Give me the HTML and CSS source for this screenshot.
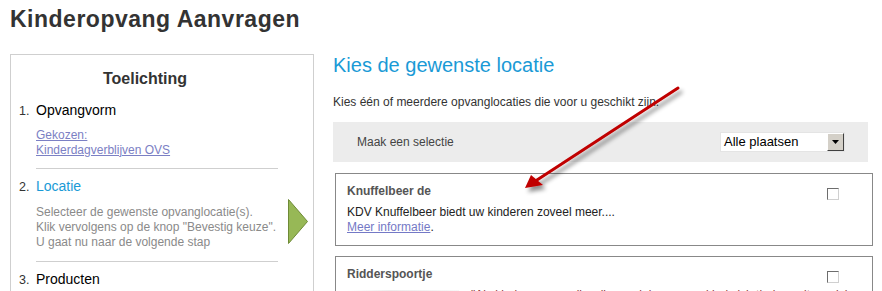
FILE: index.html
```html
<!DOCTYPE html>
<html>
	<head>
		<meta charset="UTF-8">
		<title>Kinderopvang Aanvragen</title>
		<link rel="stylesheet" href="styles.css">
	</head>
	<body>
		<div class="page">
			<h1 class="page-title">Kinderopvang Aanvragen</h1>
			<div class="main">
				<div class="sidebar">
					<h2 class="sidebar-title">Toelichting</h2>
					<div class="step">
						<span class="step-num">1.</span>
						<div class="step-body">
							<div class="step-name">Opvangvorm</div>
							<div class="step-info step-links"><a href="#">Gekozen:<br>Kinderdagverblijven OVS</a></div>
						</div>
					</div>
					<div class="step active">
						<span class="step-num">2.</span>
						<div class="step-body">
							<div class="step-name">Locatie</div>
							<div class="step-info">Selecteer de gewenste opvanglocatie(s).<br>Klik vervolgens op de knop "Bevestig keuze".<br>U gaat nu naar de volgende stap</div>
						</div>
						<svg class="step-marker" width="21" height="45" viewBox="0 0 21 45">
							<polygon points="0.5,0.5 19.5,22.5 0.5,44.5" fill="#97b856" stroke="#6e8a36"/>
						</svg>
					</div>
					<div class="step">
						<span class="step-num">3.</span>
						<div class="step-body">
							<div class="step-name">Producten</div>
						</div>
					</div>
				</div>
				<div class="content">
					<h2 class="content-title">Kies de gewenste locatie</h2>
					<p class="intro">Kies één of meerdere opvanglocaties die voor u geschikt zijn.</p>
					<div class="filter-bar">
						<span class="filter-label">Maak een selectie</span>
						<div class="select">
							<span class="select-value">Alle plaatsen</span>
							<span class="select-btn"><svg width="7" height="4" viewBox="0 0 7 4"><polygon points="0,0 7,0 3.5,4" fill="#000"/></svg></span>
						</div>
					</div>
					<div class="location">
						<div class="location-head">
							<span class="location-name">Knuffelbeer de</span>
							<span class="check"></span>
						</div>
						<p class="location-text">KDV Knuffelbeer biedt uw kinderen zoveel meer....<br><a href="#">Meer informatie</a>.</p>
					</div>
					<div class="location">
						<div class="location-head">
							<span class="location-name">Ridderspoortje</span>
							<span class="check"></span>
						</div>
						<div class="location-body">
							<span class="location-img"></span>
							<p class="location-text">"Als kinderopvang zijn wij een plek waar uw kind zich thuis voelt en zich in alle rust kan ontwikkelen."</p>
						</div>
					</div>
				</div>
			</div>
			<svg class="pointer" width="882" height="291" viewBox="0 0 882 291">
				<defs>
					<filter id="shadow" x="-20%" y="-20%" width="140%" height="140%">
						<feDropShadow dx="3" dy="4" stdDeviation="2" flood-color="#000" flood-opacity="0.45"/>
					</filter>
				</defs>
				<g filter="url(#shadow)">
					<line x1="678" y1="88" x2="537" y2="180" stroke="#c00000" stroke-width="3" stroke-linecap="round"/>
					<polygon points="525,188 531,175 543,185" fill="#c00000"/>
				</g>
			</svg>
		</div>
	</body>
</html>
```

FILE: styles.css
```css
*{box-sizing: border-box;}
html{overflow: hidden;}
body{margin: 0;font-family: "Liberation Sans", Arial, sans-serif;color: #333;background: #fff;}
.page{position: relative;padding: 7px 9px 0 10px;}
.page-title{margin: 0;font-size: 23px;line-height: 25px;font-weight: bold;letter-spacing: 0.5px;color: #333;}
.main{display: flex;align-items: flex-start;margin-top: 22px;}

/* left column */
.sidebar{flex: none;width: 304px;border: 1px solid #cfcfcf;padding: 14px 0 30px;}
.sidebar-title{margin: 0 34px 5px 0;text-align: center;font-size: 16px;line-height: 19px;font-weight: bold;color: #333;}
.step{display: flex;align-items: baseline;padding-left: 8px;}
.step-num{width: 17px;font-size: 12.5px;color: #333;}
.step-body{width: 242px;padding: 9px 0 11px;border-bottom: 1px solid #cfcfcf;}
.step:last-child .step-body{border-bottom: 0;}
.step-name{font-size: 14px;line-height: 17px;color: #000;}
.active .step-name{color: #1a9ad6;}
.step-info{margin-top: 10px;font-size: 12px;line-height: 15px;color: #8a8a8a;}
.step-links{margin-top: 9px;line-height: 14.5px;}
.step-info a{color: #7b80c4;}
.step-marker{align-self: flex-start;margin: 30px 0 0 10px;}

/* right column */
.content{flex: 1;margin-left: 19px;}
.content-title{margin: 0;font-size: 20px;line-height: 23px;font-weight: normal;color: #1a9ad6;}
.intro{margin: 18px 0 0;font-size: 12px;line-height: 15px;color: #333;}
.filter-bar{display: flex;align-items: center;justify-content: space-between;height: 40px;margin: 12px 5px 0 0;padding: 0 23px 0 24px;background: #ececec;}
.filter-label{font-size: 12px;color: #444;}
.select{display: flex;width: 125px;height: 20px;background: #fff;border: 1px solid #e4e4e4;}
.select-value{flex: 1;padding-left: 3px;font-size: 13px;line-height: 18px;color: #000;}
.select-btn{display: flex;align-items: center;justify-content: center;width: 17px;background: #d4d0c8;border: 1px solid;border-color: #fff #404040 #404040 #fff;}
.location{margin: 11px 0 0 2px;border: 1px solid #888;padding: 10px 11px;}
.location + .location{margin-top: 10px;}
.location-head{display: flex;justify-content: space-between;align-items: flex-start;}
.location-name{font-size: 12px;line-height: 15px;font-weight: bold;color: #555;}
.check{width: 12px;height: 12px;margin: 4px 22px 0 0;background: #fff;border: 1px solid;border-color: #6d6d6d #d0d0d0 #d0d0d0 #6d6d6d;}
.location-text{margin: 5px 0 0;font-size: 12px;line-height: 15px;color: #222;}
.location-text a{color: #7479c6;}
.location-body{display: flex;align-items: flex-start;}
.location-img{flex: none;width: 112px;height: 60px;margin: 7px 12px 0 0;background: linear-gradient(90deg, #fff, #ececec 40%, #f7f7f7);}
.location-body .location-text{color: #8b3a3a;}
.pointer{position: absolute;left: 0;top: 0;pointer-events: none;}
```
